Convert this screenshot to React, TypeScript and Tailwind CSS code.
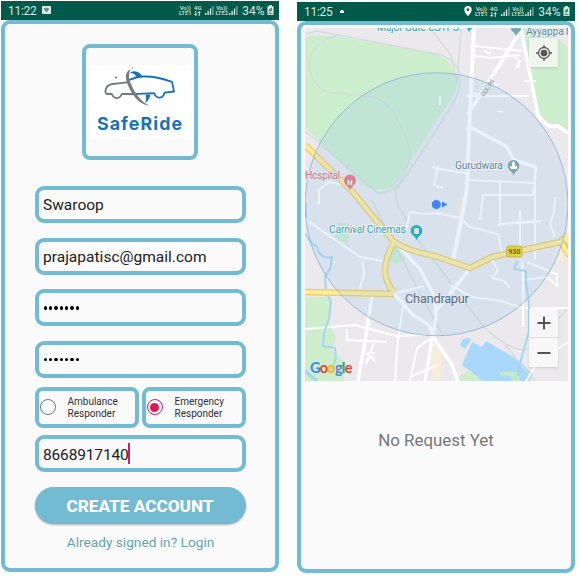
import type { ReactNode } from "react";

function Signal() {
  return (
    <svg className="h-[9px] w-[9px] shrink-0" viewBox="0 0 9 9" fill="#d5e5e1">
      <rect x="0" y="7" width="1.4" height="2" />
      <rect x="2.4" y="5" width="1.4" height="4" />
      <rect x="4.8" y="2.5" width="1.4" height="6.5" />
      <rect x="7.2" y="0" width="1.4" height="9" opacity="0.55" />
    </svg>
  );
}

function Volte({ line }: { line: string }) {
  return (
    <span className="flex w-[13px] shrink-0 flex-col items-center text-[6px] font-medium leading-[5.5px] tracking-[-0.1px] text-[#d5e5e1]">
      <span>Vo))</span>
      <span>{line}</span>
    </span>
  );
}

function StatusBar({ time, left, pin }: { time: string; left: ReactNode; pin?: boolean }) {
  return (
    <div className="flex h-[18.5px] items-center bg-[#025a4b] pl-[7px] pr-[5px] text-[#d5e5e1]">
      <span className="mt-px text-[12px] leading-none tracking-[-0.3px]">{time}</span>
      {left}
      <div className="ml-auto flex items-center">
        {pin && (
          <svg className="mr-[3px] h-[10px] w-[8px]" viewBox="0 0 8 10" fill="#fff">
            <path fillRule="evenodd" d="M4 0a3.7 3.7 0 0 0-3.7 3.7C.3 6.400 4 10 4 10s3.700-3.600 3.700-6.300A3.700 3.700 0 0 0 4 0Zm0 2.300a1.400 1.400 0 1 1 0 2.800 1.400 1.400 0 0 1 0-2.800Z" />
          </svg>
        )}
        <Volte line="LTE1" />
        <span className="ml-[2px] flex w-[8px] flex-col items-center text-[6px] font-medium leading-[5.5px]">
          <span>4G</span>
          <svg className="h-[5px] w-[7px]" viewBox="0 0 7 5" fill="#d5e5e1">
            <path d="M1.300 0h1v3H3.500L1.800 5 .1 3h1.200zM4.700 5h1V2h1.200L5.200 0 3.500 2h1.200z" />
          </svg>
        </span>
        <span className="ml-[3px] flex"><Signal /></span>
        <span className="ml-[1.5px] flex"><Volte line="LTE2" /></span>
        <span className="ml-[1px] flex"><Signal /></span>
        <span className="ml-[4px] mt-px text-[12px] leading-none">34%</span>
        <svg className="ml-[2.5px] h-[10px] w-[7px]" viewBox="0 0 7 10">
          <path fill="#dce9e6" d="M2.200 0h2.600v1.200H6.500V10H.5V1.200h1.700z" />
          <path fill="none" stroke="#025a4b" strokeWidth=".9" d="M5 3 2.200 5h2.600L2.200 7.200" />
          <path stroke="#025a4b" strokeWidth=".7" d="M1.500 8.600h4" />
        </svg>
      </div>
    </div>
  );
}

function CarLogo() {
  return (
    <svg className="h-[74px] w-[101px]" viewBox="90 65 101 74">
      <rect x="90" y="65" width="101" height="74" fill="#fff" />
      <g fill="#e9ecef">
        {[95, 106, 117, 129, 140, 151, 163, 174, 185].map((x) =>
          [69, 80, 91, 103, 114, 125, 136].map((y) => <circle key={`${x}-${y}`} cx={x} cy={y} r="0.6" />)
        )}
      </g>
      <g fill="none" strokeWidth="1.800" strokeLinejoin="round">
        <path stroke="#777b7c" d="M127 82.300 112.500 84c-4 .5-7 3-7.200 8l1.300 2h5.200c1 2.700 2.800 4 5 4s4-1.400 5-4h13" />
        <path stroke="#1672ba" d="M128.500 80.300c5-2.200 9.500-3.600 15-3.800 10-.3 19 2 28.500 5.400l2 9.600-9.500 1.200c-.8 3.200-2.600 5-5 5-2.500 0-4.200-1.800-5.200-4.500l-21.800 1" />
      </g>
      <path fill="#1672ba" d="M130 72.500c6-3 10 0 12.500 4.300l-6.500 1c.3-2.500-1.500-4.200-6-5.300ZM145.500 94.500h5c-1 4-2.500 6.800-5.300 8.500 1-3.300.9-5.500.3-8.500Z" />
      <path fill="#777b7c" d="M131 69.200c-6 2-6.200 8-3.400 15 4.200 10.500 11.600 20.800 22 21.600-8.200-3.300-15-12.900-18.600-21.800-2.500-6.300-2.600-11.500 0-14.800Z" />
      <circle cx="116" cy="77.500" r="1.100" fill="#777b7c" />
      <circle cx="132.500" cy="68" r=".7" fill="#777b7c" />
      <text x="97" y="129.800" fill="#1672ba" fontFamily="Inter, sans-serif" fontWeight="700" fontSize="17.800" textLength="85">SafeRide</text>
    </svg>
  );
}

function Field({ children, className = "" }: { children: ReactNode; className?: string }) {
  return (
    <div className={`flex h-[37px] w-[211px] items-center rounded-[9px] border-4 border-[#72bbd3] pl-[4px] text-[15.5px] leading-none text-[#202020] ${className}`}>
      {children}
    </div>
  );
}

function Password({ className }: { className: string }) {
  return (
    <Field className={className}>
      <span className="ml-[1px] flex gap-[2px]">
        {[0, 1, 2, 3, 4, 5, 6].map((i) => (
          <i key={i} className="size-[3.4px] rounded-full bg-black" />
        ))}
      </span>
    </Field>
  );
}

function Choice({ label, checked }: { label: string; checked?: boolean }) {
  return (
    <div className="flex h-[41px] w-[104px] items-center rounded-[8px] border-4 border-[#72bbd3]">
      <span className={`ml-[1px] flex size-[16px] shrink-0 items-center justify-center rounded-full border-[1.5px] ${checked ? "border-[#d81b60]" : "border-[#777]"}`}>
        {checked && <span className="size-[8.500px] rounded-full bg-[#d81b60]" />}
      </span>
      <span className="ml-[12px] mt-px text-[10px] leading-[11.7px] text-[#303030]">
        {label}
        <br />
        Responder
      </span>
    </div>
  );
}

function MapDrawing() {
  return (
    <svg className="block h-[353px] w-[263px]" viewBox="305 28 263 353" fontFamily="Roboto, sans-serif">
      <rect x="305" y="28" width="263" height="353" fill="#ebe9ec" />
      <g fill="#cdeecd">
        <path d="M305 37 317 35 340 37 435 54q12 3 17 13 8 12 4 23-2 6-21 33l-38 60q-4 6-10 6h-15q-5-1-12-7L305 127Z" />
        <path d="M523 28h22l23 20v84l-18-7-10-9-5-17Z" />
        <path d="M305 297h26l-2 28 7 12-4 13 13 12-1 19H305Z" />
        <path d="m337 222 13 2-2 20-13-6ZM392 247l11 2 2 9-8 6-10-3ZM460 376l8-5 18 10h-27Z" />
      </g>
      <path d="m460 345 3-6 6-1 2 2-6 9ZM462 365l10-23 10 5 4-6 32 19 15 14-3 7h-47Z" fill="#a9d8fc" />
      <path d="M500 372h18l2 9h-8l-2-5-10-1Z" fill="#c2e9cd" />
      <path d="m458 198 7-2-3 30-5 9ZM430 339l12 10-2 31h-8Z" fill="#f7eddb" />
      <path d="m555 242 13-6v22l-13 4Z" fill="#f7eddb" />
      <g fill="none" stroke="#d3dcdb" strokeWidth="1.400">
        <path d="m305 34 12-3 125 24 10 6q8 8 8 20-1 16-12 31L405 178q-10 14-27 15L305 131" />
        <path d="M340 35q-20 3-29 20-6 26 16 37l47 5q16 7 22 20 14 27 14 38-1 12-15 37l3 13 20 35 27 35q27 38 43 56 20 17 34 19 12-1 27-20l23-27" />
        <path d="m430 28 21 27 6 28 4-54M372 200l22 44 48 90M505 345l30 36" />
      </g>
      <g fill="none" stroke="#fff" strokeLinejoin="round">
        <path strokeWidth="4" d="m474 28-4 82-3 77-4 24-10 49" />
        <path strokeWidth="3.800" d="m518 35-42 67-8 12M521 28l12 62 5 25q5 8 12 11h8l10 7" />
        <path strokeWidth="3.500" d="m470 127 36 19 8 14 22 7M396 244l24 25 15 28 1 20-4 22-7 42M394 294l19 21 16 10 8 18 14 20 7 18M468 271l-32 40M372 296l-6 40-8 45" />
        <path strokeWidth="2" d="m475 46 47 5M475 56l15 2 30-3M467 96l62 0M468 180l67 3M435 168l35 6M305 219l55 38 30 5M362 261l2 12-4 16M397 293l27-7M404 300l-6 39-3 42M305 329l50-4 41 11 30-1M347 329v11l40 2M319 205v-15l10-8 20 4M438 166l-4 19 9 3M432 167l8 2M410 212l14 2 17-1M410 212l-4 20M436 213l24 5 10 9 28 7 4 18M500 180v44l37-2M480 220l3-25 50 0 2-14 1-14M535 168v92M555 197l-1 15-4 12 5 13M522 260l1 20 24-3 10 9 0-12-30-12M450 285l22 12 30 4 20 7h46M492 260l6 10-6 8 12 3 6 7M523 272v55M568 342l-30 20-12 19M430 339l-13 9-7 33M438 365l-26 11M375 340l-9 24M520 210v42M498 225l20-3 23-1M363 354l12-1M365 360l7-3 3 5M365 338l-6 35" />
        <path strokeWidth="1.700" d="m514 57 6 4-2 7M484 51l7 3M486 83l12 2M524 81l12 0M496 111l7 1M440 96v9M515 69l5-8M473 93l14 4" />
      </g>
      <g fill="none" stroke="#a3d6f5" strokeWidth="2">
        <path d="M305 233q5 10 12 14 3 13 15 10l-2 12-5 7 1 17 5 8-2 18-5 14-1 13 12 2 1 10-6 15M517 261l-3 8 12 2 0 12 3 20v28l-7 25-5 20" />
        <path d="M305 203v14M305 371l12 10" strokeWidth="3.500" />
      </g>
      <g fill="none" strokeLinejoin="round">
        <path stroke="#eecb61" strokeWidth="6.500" d="m305 145 47 46 42 51q14 9 41 14l35 12 22-11 22-5 46-10 8-7M394 242q-9 16-9 29 1 13 9 21M305 292l89 2M560 241l10 15M565 237l8 12" />
        <path stroke="#ffec9d" strokeWidth="4" d="m305 145 47 46 42 51q14 9 41 14l35 12 22-11 22-5 46-10 8-7M394 242q-9 16-9 29 1 13 9 21M305 292l89 2M560 241l10 15M565 237l8 12" />
      </g>
      <circle cx="436.500" cy="204.300" r="131.500" fill="#8fc3ee" fillOpacity=".2" stroke="#8fb4da" strokeWidth=".9" />
      <g fill="#5f9daf" stroke="#eaf1f2" strokeWidth="2" paintOrder="stroke" fontSize="10.500">
        <text x="377" y="31" fill="#3f9eaa" textLength="82">Major Gate CSTPS</text>
        <text x="526" y="35" fill="#62849a" textLength="49">Ayyappa M</text>
        <text x="305" y="179" fill="#b77c8b" textLength="35" stroke="#e2e6ee">Hospital</text>
        <text x="329" y="233" fill="#429fb0" textLength="77">Carnival Cinemas</text>
        <text x="455" y="169" fill="#64849b" textLength="48">Gurudwara</text>
        <text x="405" y="303" fill="#5c6d80" fontSize="13" textLength="64" stroke="#dfe7ef">Chandrapur</text>
      </g>
      <text transform="translate(484 97) rotate(-57)" fill="#89949d" fontSize="6.500" textLength="19">DOC Rd</text>
      <path d="M350 191q-1-4-4-6a6 6 0 1 1 8 0q-3 2-4 6Z" fill="#da8290" />
      <text x="350" y="185" textAnchor="middle" fill="#fff" fontSize="7" fontWeight="700">H</text>
      <path d="M416.500 240q-1-3-4-5a5.800 5.800 0 1 1 8 0q-3 2-4 5Z" fill="#25aebd" />
      <path d="M414 228h5v6h-5zM415.300 228v6M417.700 228v6" fill="#fff" stroke="#25aebd" strokeWidth=".4" />
      <path d="M513.500 176q-1-4-4-6a5.800 5.800 0 1 1 8 0q-3 2-4 6Z" fill="#7aa4b7" />
      <path d="M510 169v-3h2v-3l1.500-2 1.500 2v3h2v3z" fill="#fff" />
      <path d="M516 36q-1-3-4-5-2-2 0-4h8q2 2 0 4-3 2-4 5Z" fill="#7aa4b7" />
      <path d="m467 28 2 4 3-4Z" fill="#25bfc5" />
      <rect x="506.500" y="246" width="15.500" height="11" rx="2" fill="#ded33e" stroke="#b8ad31" strokeWidth=".7" />
      <text x="514.300" y="254.200" textAnchor="middle" fill="#5d5b26" fontSize="7" fontWeight="600">930</text>
      <circle cx="436.300" cy="204.500" r="5" fill="#4285f4" stroke="#eaf2fa" strokeWidth=".8" />
      <path d="m442 201.500 5.500 3-5.500 3Z" fill="#4285f4" />
      <text x="310" y="373" fontFamily="Lato, sans-serif" fontSize="14.500" fontWeight="700" textLength="42.500">
        <tspan fill="#4285f4">G</tspan><tspan fill="#ea4335">o</tspan><tspan fill="#fbbc05">o</tspan><tspan fill="#4285f4">g</tspan><tspan fill="#34a853">l</tspan><tspan fill="#ea4335">e</tspan>
      </text>
    </svg>
  );
}

function SignUp() {
  return (
    <section className="mt-px flex h-[571px] w-[278px] flex-col">
      <StatusBar
        time="11:22"
        left={
          <svg className="ml-[6px] h-[8px] w-[9px]" viewBox="0 0 9 8">
            <rect width="9" height="8" rx=".8" fill="#dce9e6" />
            <path d="M1.500 2.800q3-2.200 6 0L4.500 6.500Z" fill="#5d928a" />
          </svg>
        }
      />
      <div className="flex flex-1 flex-col items-center rounded-[9px] border-4 border-[#72bbd3] bg-[#fafafa] pt-[20.5px]">
        <div className="flex h-[116px] w-[116px] shrink-0 justify-center rounded-[8px] border-4 border-[#72bbd3] pt-[17px]">
          <CarLogo />
        </div>
        <Field className="mt-[26px] shrink-0"><span className="mt-[3px] pl-[0.5px]">Swaroop</span></Field>
        <Field className="mt-[14.7px] shrink-0"><span className="mt-[3px] pl-[0.5px] tracking-[0.02px]">prajapatisc@gmail.com</span></Field>
        <Password className="mt-[14.8px] shrink-0" />
        <Password className="mt-[14.8px] shrink-0" />
        <div className="mt-[8.500px] flex w-[211px] shrink-0 justify-between">
          <Choice label="Ambulance" />
          <Choice label="Emergency" checked />
        </div>
        <Field className="mt-[7.500px] shrink-0">
          <span className="mt-[3px] pl-[0.5px] tracking-[-0.15px]">8668917140</span>
          <span className="-ml-px h-[21px] w-[2px] shrink-0 bg-[#d81b60]" />
        </Field>
        <button className="mt-[15px] h-[37px] w-[211px] shrink-0 rounded-full bg-[#72bbd3] pt-[2px] text-[17.2px] font-extrabold leading-none text-white shadow-[0_1px_2px_rgba(0,0,0,0.3)]">
          CREATE ACCOUNT
        </button>
        <a className="mt-[10.500px] whitespace-nowrap pl-px text-[13.700px] leading-[14px] text-[#66a4b4]">Already signed in? Login</a>
      </div>
    </section>
  );
}

function RequestMap() {
  return (
    <section className="ml-[18px] mt-[2px] flex h-[571px] w-[278px] flex-col">
      <StatusBar time="11:25" pin left={<span className="ml-[8px] h-[3px] w-[4px] rounded-t-full bg-white" />} />
      <div className="flex flex-1 flex-col rounded-[9px] border-4 border-[#72bbd3] bg-[#fafafa]">
        <div className="relative ml-[4px] mt-[3.500px] h-[353px] w-[263px] overflow-hidden">
          <MapDrawing />
          <div className="absolute left-[224px] top-[10px] flex size-[29px] items-center justify-center bg-[#f3f6f2]/90 shadow-sm">
            <svg className="size-[16px]" viewBox="0 0 16 16" fill="none" stroke="#555" strokeWidth="1.300">
              <circle cx="8" cy="8" r="5.500" />
              <circle cx="8" cy="8" r="2.700" fill="#555" />
              <path d="M8 0v3M8 13v3M0 8h3M13 8h3" />
            </svg>
          </div>
          <div className="absolute left-[224px] top-[281px] flex w-[29px] flex-col bg-[#f8f8f8]/90 shadow-sm">
            <div className="flex h-[29px] items-center justify-center border-b border-[#dedede]">
              <svg className="size-[14px]" viewBox="0 0 14 14" stroke="#555" strokeWidth="2"><path d="M.5 7h13M7 .5v13" /></svg>
            </div>
            <div className="flex h-[29px] items-center justify-center">
              <svg className="size-[14px]" viewBox="0 0 14 14" stroke="#555" strokeWidth="2"><path d="M.5 7h13" /></svg>
            </div>
          </div>
        </div>
        <p className="mt-[50px] text-center text-[16.900px] leading-[18px] text-[#777]">No Request Yet</p>
      </div>
    </section>
  );
}

export default function App() {
  return (
    <main className="flex h-[581px] w-[579px] overflow-hidden bg-white pl-px font-['Roboto',sans-serif]">
      <SignUp />
      <RequestMap />
    </main>
  );
}
